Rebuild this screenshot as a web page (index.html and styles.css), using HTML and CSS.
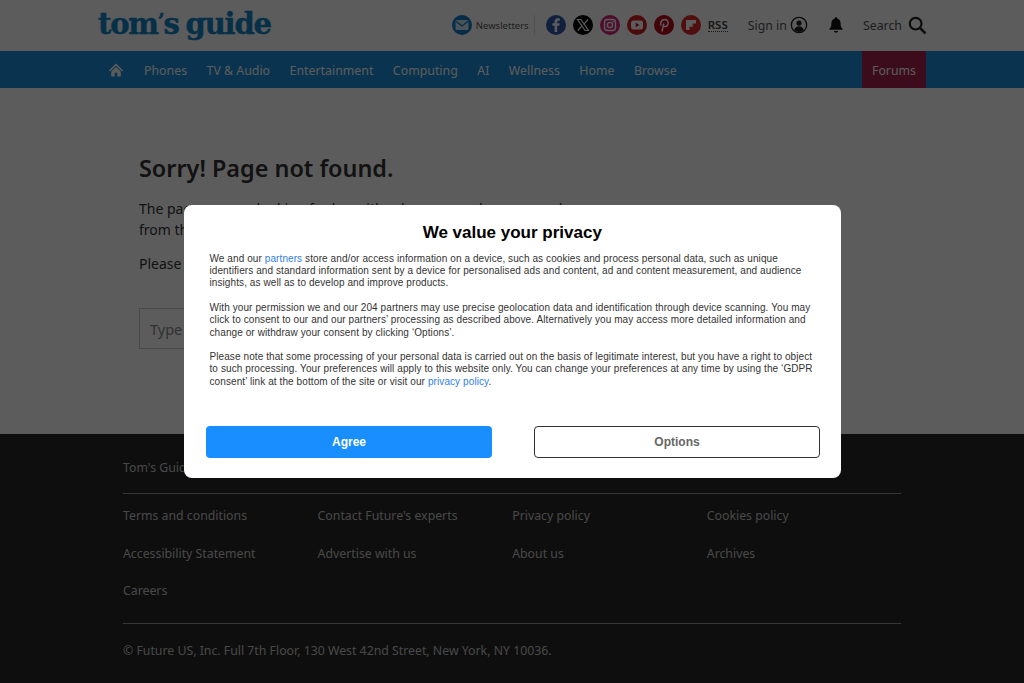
FILE: index.html
```html
<!DOCTYPE html>
<html>
<head>
    <meta charset="utf-8">
    <title>Sorry! Page not found | Tom's Guide</title>
    <link rel="stylesheet" href="styles.css">
</head>
<body>
    <header class="top-bar">
        <div class="top-inner">
            <a class="logo">tom<span class="logo-apos">’</span>s guide</a>
            <div class="top-tools">
                <div class="newsletter">
                    <span class="social social-mail">
                        <svg viewBox="0 0 20 20"><rect x="3.500" y="5" width="13" height="10" rx="1.200" fill="#cfe6f5"/><path d="M3.500 6l6.500 5 6.500-5" fill="none" stroke="#0f7cc4" stroke-width="1.200"/></svg>
                    </span>
                    <span class="newsletter-label">Newsletters</span>
                </div>
                <div class="socials">
                    <span class="social social-fb"><svg viewBox="0 0 20 20"><path d="M11.200 17v-6.200h2.100l.4-2.500h-2.500V6.900c0-.8.3-1.200 1.300-1.200h1.300V3.400c-.5-.1-1.200-.2-1.900-.2-2 0-3.300 1.200-3.300 3.400v1.700H6.400v2.500h2.200V17z" fill="#fff"/></svg></span>
                    <span class="social social-x"><svg viewBox="0 0 20 20"><path d="M4.500 4.500h3.400l7.600 11h-3.400z" fill="none" stroke="#fff" stroke-width="1.200"/><path d="M15 4.500l-4.300 4.800M9 10.900l-4.200 4.600" stroke="#fff" stroke-width="1.200" fill="none"/></svg></span>
                    <span class="social social-ig"><svg viewBox="0 0 20 20"><rect x="4.500" y="4.500" width="11" height="11" rx="3" fill="none" stroke="#fff" stroke-width="1.400"/><circle cx="10" cy="10" r="2.600" fill="none" stroke="#fff" stroke-width="1.400"/><circle cx="13.200" cy="6.800" r=".8" fill="#fff"/></svg></span>
                    <span class="social social-yt"><svg viewBox="0 0 20 20"><rect x="4" y="5.500" width="12" height="9" rx="2.500" fill="#fff"/><path d="M8.700 7.800v4.400l3.800-2.200z" fill="#c4161c"/></svg></span>
                    <span class="social social-pin"><svg viewBox="0 0 20 20"><path d="M8 16.500l1.800-8M7 10.800C5.800 7.500 7.700 4.500 10.500 4.500c2.500 0 4 1.800 3.600 4.200-.4 2.300-2.700 3.700-4.600 2.300" fill="none" stroke="#fff" stroke-width="1.500"/></svg></span>
                    <span class="social social-flip"><svg viewBox="0 0 20 20"><path d="M5 5h10v3.400h-3.300v3.300H8.400V15H5z" fill="#fff"/></svg></span>
                    <span class="rss">RSS</span>
                </div>
                <div class="sign-in">
                    <span>Sign in</span>
                    <svg class="user-icon" viewBox="0 0 20 20"><circle cx="10" cy="10" r="8.500" fill="none" stroke="#222" stroke-width="1.500"/><circle cx="10" cy="7.800" r="2.900" fill="#222"/><path d="M4.700 15.500c.7-3 2.800-4.200 5.300-4.200s4.600 1.200 5.300 4.200c-1.400 1.400-3.200 2.200-5.300 2.200s-3.900-.8-5.300-2.200z" fill="#222"/></svg>
                </div>
                <svg class="bell-icon" viewBox="0 0 20 20"><path d="M10 1.500c.8 0 1.300.5 1.400 1.300 2.500.7 3.700 2.800 3.700 5.500 0 3.200.8 4.600 2.200 6v1H2.700v-1c1.400-1.400 2.200-2.800 2.200-6 0-2.700 1.200-4.800 3.700-5.500.1-.8.600-1.300 1.400-1.300zM7.800 16.800h4.400c0 1.100-1 1.900-2.200 1.900s-2.200-.8-2.200-1.900z" fill="#111"/></svg>
                <div class="search">
                    <span>Search</span>
                    <svg class="search-icon" viewBox="0 0 20 20"><circle cx="8.500" cy="8.500" r="6.500" fill="none" stroke="#222" stroke-width="2.400"/><path d="M13.500 13.500l5 5" stroke="#222" stroke-width="3" stroke-linecap="round"/></svg>
                </div>
            </div>
        </div>
    </header>

    <nav class="main-nav">
        <div class="nav-inner">
            <svg class="home-icon" viewBox="0 0 20 20"><path d="M10 2L1 10.500l1.300 1.300L10 4.600l7.700 7.200 1.300-1.300z" fill="#fff"/><path d="M10 6.300l-6 5.600V18h4.200v-4.500h3.600V18H16v-6.100z" fill="#fff"/></svg>
            <a>Phones</a>
            <a>TV &amp; Audio</a>
            <a>Entertainment</a>
            <a>Computing</a>
            <a>AI</a>
            <a>Wellness</a>
            <a>Home</a>
            <a>Browse</a>
            <a class="forums">Forums</a>
        </div>
    </nav>

    <main class="content">
        <h1>Sorry! Page not found.</h1>
        <p>The page you are looking for has either been moved or removed<br>from the site.</p>
        <p>Please try searching for what you want below.</p>
        <div class="search-box">Type your search</div>
    </main>

    <footer class="footer">
        <div class="footer-inner">
            <div class="footer-brand">Tom's Guide is part of Future US Inc, an international media group.</div>
            <div class="footer-links">
                <a>Terms and conditions</a>
                <a>Contact Future's experts</a>
                <a>Privacy policy</a>
                <a>Cookies policy</a>
                <a>Accessibility Statement</a>
                <a>Advertise with us</a>
                <a>About us</a>
                <a>Archives</a>
                <a>Careers</a>
            </div>
            <div class="footer-address">© Future US, Inc. Full 7th Floor, 130 West 42nd Street, New York, NY 10036.</div>
        </div>
    </footer>

    <div class="overlay">
        <div class="consent">
            <h2>We value your privacy</h2>
            <p>We and our <a>partners</a> store and/or access information on a device, such as cookies and process personal data, such as unique<br>identifiers and standard information sent by a device for personalised ads and content, ad and content measurement, and audience<br>insights, as well as to develop and improve products.</p>
            <p>With your permission we and our 204 partners may use precise geolocation data and identification through device scanning. You may<br>click to consent to our and our partners’ processing as described above. Alternatively you may access more detailed information and<br>change or withdraw your consent by clicking ‘Options’.</p>
            <p>Please note that some processing of your personal data is carried out on the basis of legitimate interest, but you have a right to object<br>to such processing. Your preferences will apply to this website only. You can change your preferences at any time by using the ‘GDPR<br>consent’ link at the bottom of the site or visit our <a>privacy policy</a>.</p>
            <div class="consent-buttons">
                <button type="button" class="agree-btn">Agree</button>
                <button type="button" class="options-btn">Options</button>
            </div>
        </div>
    </div>
</body>
</html>
```

FILE: styles.css
```css
* {
    box-sizing: border-box;
}
html, body {
    height: 683px;
    overflow: hidden;
}
body {
    margin: 0;
    background: #fff;
    color: #333;
    font-family: "Noto Sans", sans-serif;
    display: flex;
    flex-direction: column;
}
.top-bar {
    height: 51px;
    background: #fff;
}
.top-inner {
    width: 828px;
    margin-left: 98px;
    height: 51px;
    display: flex;
    align-items: center;
    justify-content: space-between;
}
.logo {
    font-family: "DejaVu Serif", serif;
    font-weight: bold;
    font-size: 29px;
    letter-spacing: -1.200px;
    word-spacing: -2px;
    color: #1285c8;
    -webkit-text-stroke: 0.5px #1285c8;
    margin-top: -3px;
}
.logo-apos {
    font-size: 20px;
    vertical-align: 6px;
}
.top-tools {
    display: flex;
    align-items: center;
    color: #555;
    font-size: 12.350px;
    margin-top: -1px;
}
.newsletter {
    display: flex;
    align-items: center;
    gap: 4px;
    padding-right: 5px;
    margin-right: 11px;
    border-right: 1px solid #ddd;
}
.newsletter-label {
    font-size: 9.500px;
}
.socials {
    display: flex;
    align-items: center;
    gap: 7px;
    margin-right: 20px;
}
.social {
    display: block;
    width: 20px;
    height: 20px;
    border-radius: 50%;
}
.social svg {
    display: block;
    width: 20px;
    height: 20px;
}
.social-mail { background: #0f7cc4; }
.social-fb { background: #2d5aa8; }
.social-x { background: #000; }
.social-ig { background: #d6247d; }
.social-yt { background: #d01f1f; }
.social-pin { background: #bd081c; }
.social-flip { background: #e12828; }
.rss {
    font-size: 11.500px;
    font-weight: 600;
    color: #444;
    border-bottom: 1px dotted #444;
    line-height: 13px;
}
.sign-in {
    display: flex;
    align-items: center;
    gap: 3px;
    margin-right: 19px;
}
.user-icon {
    width: 18px;
    height: 18px;
}
.bell-icon {
    width: 18px;
    height: 18px;
    margin-right: 18px;
}
.search {
    display: flex;
    align-items: center;
    gap: 6px;
}
.search-icon {
    width: 18px;
    height: 18px;
}
.main-nav {
    height: 37px;
    background: #1a8ed8;
}
.nav-inner {
    width: 828px;
    margin-left: 98px;
    height: 37px;
    display: flex;
    align-items: center;
    padding-left: 10px;
    font-size: 12.350px;
}
.nav-inner a {
    color: #fff;
    margin: 2px 19.500px 0 0;
}
.home-icon {
    width: 16px;
    height: 16px;
    margin-right: 20px;
}
.nav-inner .forums {
    margin: 0 0 0 auto;
    width: 64px;
    height: 37px;
    line-height: 39px;
    text-align: center;
    background: #a6204f;
}
.content {
    height: 346px;
    padding: 65px 0 0 139px;
    font-size: 14px;
    color: #333;
}
.content h1 {
    margin: 0 0 15px;
    font-size: 23.400px;
    line-height: 30px;
    font-weight: 600;
    color: #333;
}
.content p {
    margin: 0 0 13px;
    line-height: 21px;
}
.search-box {
    width: 400px;
    height: 41px;
    margin-top: 34px;
    padding-left: 10px;
    border: 1px solid #ccc;
    line-height: 41px;
    font-size: 14.500px;
    color: #888;
}
.footer {
    flex: 1;
    background: #272727;
    color: #c8c8c8;
    font-size: 12.300px;
}
.footer-inner {
    width: 778px;
    margin-left: 123px;
}
.footer-brand {
    height: 60px;
    padding-top: 25px;
    border-bottom: 1px solid #999;
}
.footer-links {
    display: grid;
    grid-template-columns: repeat(4, 194.600px);
    row-gap: 20.500px;
    padding: 13px 0 24px;
    border-bottom: 1px solid #999;
}
.footer-links a {
    line-height: 17px;
}
.footer-address {
    padding-top: 18px;
}
.overlay {
    position: fixed;
    top: 0;
    left: 0;
    width: 100%;
    height: 100%;
    background: rgba(0, 0, 0, 0.64);
}
.consent {
    position: absolute;
    top: 205px;
    left: 183.500px;
    width: 657.500px;
    height: 273px;
    padding: 16px 26px 0;
    background: #fff;
    border-radius: 8px;
    font-family: "Liberation Sans", Arial, sans-serif;
    color: #333;
}
.consent h2 {
    margin: 0 0 7.500px;
    font-size: 17px;
    line-height: 24px;
    text-align: center;
    color: #000;
}
.consent p {
    margin: 0 0 12px;
    font-size: 10px;
    line-height: 12.400px;
    letter-spacing: 0.09px;
    white-space: nowrap;
}
.consent a {
    color: #2f80e8;
}
.consent-buttons {
    position: absolute;
    left: 22.500px;
    right: 21px;
    bottom: 20px;
    display: flex;
    justify-content: space-between;
}
.consent-buttons button {
    width: 286px;
    height: 32px;
    border-radius: 4px;
    font-family: "Liberation Sans", Arial, sans-serif;
    font-size: 12px;
    font-weight: bold;
}
.agree-btn {
    background: #198fff;
    border: none;
    color: #fff;
}
.options-btn {
    background: #fff;
    border: 1px solid #333;
    color: #666;
}
```
